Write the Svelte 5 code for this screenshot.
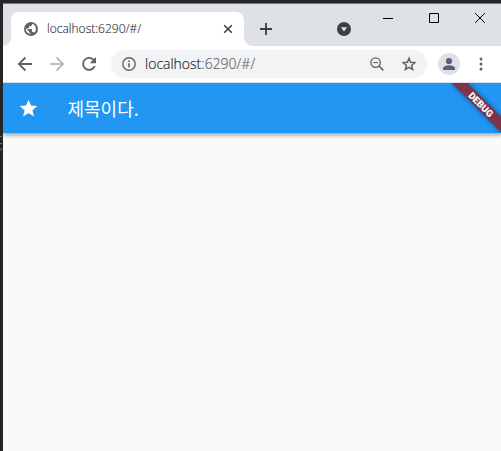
<script>
  const url = { host: 'localhost', rest: ':6290/#/' };
</script>

<div class="desktop">
  <svg class="code" width="3" height="20" viewBox="0 0 3 20">
    <path d="M0 .5h2M0 7.5h2M0 14h1l1-2" stroke="#61834b" fill="none" />
  </svg>
  <div class="window">
    <header class="tabs">
      <div class="tab">
        <svg class="globe" width="16" height="16" viewBox="0 0 16 16">
          <circle cx="8" cy="8" r="7" fill="#5f6368" />
          <path d="M9 2.8v.7c0 .8-.6 1.4-1.4 1.4H6.3v1.3c0 .4-.3.7-.7.7H4.3v1.2h4c.4 0 .7.3.7.7v2h.7c.6 0 1 .4 1.2.9A5 5 0 0 0 9 2.8zM2.8 7.2a5.2 5.2 0 0 0 4.5 5.9v-1.3c-.8 0-1.4-.6-1.4-1.3v-.3z" fill="#fff" />
        </svg>
        <span class="title">{url.host}{url.rest}</span>
        <svg class="close" width="10" height="10" viewBox="0 0 10 10"><path d="m1.2 1.2 7.6 7.6M8.8 1.2 1.2 8.8" stroke="#3c4043" stroke-width="1.6" /></svg>
      </div>
      <svg class="plus" width="12" height="12" viewBox="0 0 12 12"><path d="M6 0v12M0 6h12" stroke="#3c4043" stroke-width="1.8" /></svg>
      <svg class="search" width="14" height="14" viewBox="0 0 14 14"><circle cx="7" cy="7" r="7" fill="#3c4043" /><path d="M3.9 5.2h6.2L7 9.6z" fill="#dee1e6" /></svg>
      <div class="controls">
        <svg width="10" height="11" viewBox="0 0 10 11"><path d="M0 5.5h10" stroke="#000" /></svg>
        <svg width="10" height="11" viewBox="0 0 10 11"><path d="M.5 .5h9v9h-9z" stroke="#000" fill="none" /></svg>
        <svg width="10" height="11" viewBox="0 0 10 11"><path d="m.2.2 9.6 9.6M9.8.2.2 9.8" stroke="#000" /></svg>
      </div>
    </header>

    <nav class="toolbar">
      <svg class="back" width="16" height="16" viewBox="0 0 16 16" fill="none" stroke="#5f6368" stroke-width="1.9"><path d="M15 8H2.2M8.4 1.5 1.9 8l6.5 6.5" /></svg>
      <svg class="forward" width="16" height="16" viewBox="0 0 16 16" fill="none" stroke="#babcbe" stroke-width="1.9"><path d="M1 8h12.8M7.6 1.5 14.1 8l-6.5 6.5" /></svg>
      <svg class="reload" width="16" height="16" viewBox="0 0 16 16"><path d="M13.7 10a6 6 0 1 1-1.3-6.3l1.3 1.3" fill="none" stroke="#5f6368" stroke-width="1.9" /><path d="M15 1v6.3H8.7z" fill="#5f6368" /></svg>
      <div class="omnibox">
        <svg class="info" width="16" height="16" viewBox="0 0 16 16"><circle cx="8" cy="8" r="6.2" fill="none" stroke="#5f6368" stroke-width="1.4" /><path d="M8 7.2v4.1M8 4.5v1.6" stroke="#5f6368" stroke-width="1.6" /></svg>
        <span class="address">{url.host}<i>{url.rest}</i></span>
        <svg class="zoom" width="14" height="14" viewBox="0 0 14 14" fill="none" stroke="#5f6368"><circle cx="5.6" cy="5.6" r="4.7" stroke-width="1.3" /><path d="m9 9 4.3 4.3" stroke-width="1.7" /><path d="M3.2 5.6H8" stroke-width="1.1" /></svg>
        <svg class="bookmark" width="16" height="16" viewBox="0 0 16 16"><path d="m8 2.3 1.6 3.9 4.2.4-3.2 2.8 1 4.1L8 11.3l-3.6 2.2 1-4.1-3.2-2.8 4.2-.4z" fill="none" stroke="#5f6368" stroke-width="1.5" /></svg>
      </div>
      <svg class="profile" width="22" height="22" viewBox="0 0 22 22"><circle cx="11" cy="11" r="11" fill="#dee1e6" /><circle cx="11" cy="8" r="3.1" fill="#576175" /><path d="M5 17v-1.5c0-2 3.5-3.2 6-3.2s6 1.2 6 3.2V17z" fill="#576175" /></svg>
      <svg class="menu" width="4" height="14" viewBox="0 0 4 14" fill="#5f6368"><circle cx="2" cy="2" r="1.5" /><circle cx="2" cy="7" r="1.5" /><circle cx="2" cy="12" r="1.5" /></svg>
    </nav>

    <main class="page">
      <div class="appbar">
        <svg class="star" width="21" height="21" viewBox="0 0 24 24"><path d="M12 17.27 18.18 21l-1.64-7.03L22 9.24l-7.19-.61L12 2 9.19 8.63 2 9.24l5.46 4.73L5.82 21z" fill="#fff" /></svg>
        <h1>제목이다.</h1>
      </div>
      <div class="banner">DEBUG</div>
    </main>
  </div>
</div>

<style>
  .desktop {
    position: relative;
    box-sizing: border-box;
    width: 501px;
    height: 451px;
    padding: 3px 0 0 3px;
    overflow: hidden;
    background: #252526;
    font-family: "Noto Sans", "Noto Sans CJK KR", sans-serif;
  }
  .code { position: absolute; left: 0; top: 136px; }
  svg { display: block; flex: none; }
  .window {
    display: flex;
    flex-direction: column;
    box-sizing: border-box;
    width: 498px;
    height: 448px;
    border-top: 1px solid #75787b;
    background: #fff;
  }
  .tabs { display: flex; flex: none; height: 42px; background: #dee1e6; }
  .tab {
    position: relative;
    display: flex;
    align-items: center;
    box-sizing: border-box;
    width: 233px;
    height: 34px;
    margin: 8px 0 0 8px;
    padding: 0 11px 0 12px;
    border-radius: 8px 8px 0 0;
    background: #fff;
  }
  .tab::before, .tab::after {
    content: "";
    position: absolute;
    bottom: 0;
    width: 8px;
    height: 8px;
  }
  .tab::before { left: -8px; background: radial-gradient(circle at 0 0, transparent 7.5px, #fff 8px); }
  .tab::after { right: -8px; background: radial-gradient(circle at 100% 0, transparent 7.5px, #fff 8px); }
  .title {
    flex: 1;
    margin-left: 8px;
    color: #303336;
    font: 300 12px/18px "Open Sans", sans-serif;
    -webkit-text-stroke: 0.15px;
    white-space: nowrap;
  }
  .plus { margin: 19px 0 0 16px; }
  .search { margin: 18px 0 0 65px; }
  .controls { display: flex; gap: 36px; margin: 9px 0 0 32px; height: 11px; }
  .toolbar { display: flex; align-items: center; flex: none; height: 36px; border-bottom: 1px solid #dadce0; }
  .back { margin-left: 14px; }
  .forward, .reload { margin-left: 16px; }
  .omnibox {
    display: flex;
    align-items: center;
    box-sizing: border-box;
    width: 316px;
    height: 28px;
    margin-left: 14px;
    padding: 0 10px;
    border-radius: 14px;
    background: #f1f3f4;
  }
  .address {
    flex: 1;
    margin-left: 8px;
    color: #202124;
    font: 300 14px/20px "Open Sans", sans-serif;
    -webkit-text-stroke: 0.15px;
    white-space: nowrap;
  }
  .address i { color: #5f6368; font-style: normal; }
  .bookmark { margin-left: 17px; }
  .profile { margin-left: 11px; }
  .menu { margin-left: 19px; }
  .page { position: relative; flex: 1; overflow: hidden; background: #fafafa; }
  .appbar {
    display: flex;
    align-items: center;
    height: 50px;
    padding-left: 15px;
    background: #2196f3;
    box-shadow: 0 2px 4px -1px #0003, 0 3px 4px #00000024, 0 1px 6px #0000001f;
  }
  h1 {
    margin: 0 0 0 28.5px;
    color: #fff;
    font: 400 18px/26px "Noto Sans CJK KR", sans-serif;
    white-space: nowrap;
  }
  .banner {
    position: absolute;
    right: -16px;
    top: 16px;
    width: 72px;
    height: 11px;
    transform: rotate(45deg);
    background: #7d3349;
    box-shadow: 0 0 5px #0007;
    color: #fff;
    font: 900 9.5px/11px Roboto, sans-serif;
    text-align: center;
  }
</style>
